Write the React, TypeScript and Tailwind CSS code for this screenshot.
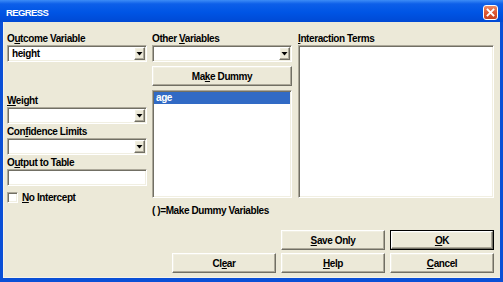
import React from "react";

const SUNKEN =
  "border border-t-[#aca899] border-l-[#aca899] border-r-white border-b-white shadow-[inset_1px_1px_0_#716f64,inset_-1px_-1px_0_#f1efe2] bg-white";
const RAISED =
  "border border-t-white border-l-white border-r-[#716f64] border-b-[#716f64] shadow-[inset_-1px_-1px_0_#aca899,inset_1px_1px_0_#f1efe2] bg-[#ece9d8]";
const TXT = "text-[10px] font-bold tracking-[-0.4px] text-black whitespace-nowrap";

function Label({ children, className = "" }: { children: React.ReactNode; className?: string }) {
  return <div className={`h-[12px] leading-[12px] ${TXT} ${className}`}>{children}</div>;
}

function Arrow() {
  return (
    <svg width="7" height="4" viewBox="0 0 7 4">
      <polygon points="0.5,0 6.5,0 3.5,3.5" fill="#000" />
    </svg>
  );
}

function Combo({ value }: { value?: string }) {
  return (
    <div className={`h-[17px] flex p-[1px] ${SUNKEN}`}>
      <div className={`flex-1 pl-[3px] leading-[13px] ${TXT}`}>{value}</div>
      <div className={`w-[11px] flex items-center justify-center pt-[1px] ${RAISED}`}>
        <Arrow />
      </div>
    </div>
  );
}

function Button({ children, def = false }: { children: React.ReactNode; def?: boolean }) {
  if (def) {
    return (
      <div className="w-[104px] h-[20px] border border-black flex">
        <div className={`flex-1 flex items-center justify-center ${RAISED} ${TXT}`}>{children}</div>
      </div>
    );
  }
  return (
    <div className={`w-[104px] h-[20px] flex items-center justify-center ${RAISED} ${TXT}`}>{children}</div>
  );
}

export default function App() {
  return (
    <div className="w-[503px] h-[282px] overflow-hidden flex flex-col bg-[#0a4fd6] font-['Liberation_Sans',Arial,sans-serif]">
      {/* Title bar */}
      <div className="h-[22px] shrink-0 flex justify-between bg-[linear-gradient(to_bottom,#3d8cf6_0%,#0d5fe9_18%,#0055e5_55%,#0049d4_100%)]">
        <div className="pl-[6px] pt-[7px] leading-[11px] text-[9.5px] font-bold tracking-[-0.6px] text-white">
          REGRESS
        </div>
        <div className="pr-[5px] pt-[5px]">
          <div className="w-[15px] h-[15px] rounded-[3px] border border-white bg-[linear-gradient(to_bottom,#ec8a66_0%,#de5a34_50%,#c8421f_100%)] flex items-center justify-center">
            <svg width="9" height="9" viewBox="0 0 9 9">
              <path d="M1.5 1.5 L7.5 7.5 M7.5 1.5 L1.5 7.5" stroke="#fff" strokeWidth="1.8" strokeLinecap="square" />
            </svg>
          </div>
        </div>
      </div>

      {/* Body */}
      <div className="flex-1 mx-[3px] mb-[4px] bg-[#ece9d8] border-l border-b border-[#f4f2ea] flex flex-col pl-[3px] pr-[6px] pt-[11px]">
        <div className="flex">
          {/* Left column */}
          <div className="w-[140px] flex flex-col">
            <Label>
              O<u>u</u>tcome Variable
            </Label>
            <Combo value="height" />
            <Label className="mt-[33px]">
              <u>W</u>eight
            </Label>
            <Combo />
            <Label className="mt-[2px]">
              Con<u>f</u>idence Limits
            </Label>
            <Combo />
            <Label className="mt-[2px]">
              O<u>u</u>tput to Table
            </Label>
            <div className={`h-[17px] ${SUNKEN}`} />
            <div className="mt-[6px] flex items-center h-[11px]">
              <div className={`w-[11px] h-[11px] ${SUNKEN}`} />
              <span className={`ml-[4px] leading-[12px] ${TXT}`}>
                <u>N</u>o Intercept
              </span>
            </div>
          </div>

          {/* Middle column */}
          <div className="w-[140px] ml-[5px] flex flex-col">
            <Label>
              Other <u>V</u>ariables
            </Label>
            <Combo />
            <div className="mt-[4px]">
              <div className={`w-full h-[20px] flex items-center justify-center ${RAISED} ${TXT}`}>
                Ma<u>k</u>e Dummy
              </div>
            </div>
            <div className={`mt-[4px] h-[108px] p-[1px] ${SUNKEN}`}>
              <div className={`h-[12px] leading-[12px] pl-[2px] bg-[#316ac5] ${TXT} text-white`}>age</div>
            </div>
            <Label className="mt-[7px]">( )=Make Dummy Variables</Label>
          </div>

          {/* Right column */}
          <div className="flex-1 ml-[6px] flex flex-col">
            <Label>
              <u>I</u>nteraction Terms
            </Label>
            <div className={`h-[153px] ${SUNKEN}`} />
          </div>
        </div>

        {/* Buttons */}
        <div className="mt-[13px] flex flex-col items-end gap-[3px]">
          <div className="flex gap-[5px]">
            <Button>
              <u>S</u>ave Only
            </Button>
            <Button def>
              <u>O</u>K
            </Button>
          </div>
          <div className="flex gap-[5px]">
            <Button>
              Cl<u>e</u>ar
            </Button>
            <Button>
              <u>H</u>elp
            </Button>
            <Button>
              <u>C</u>ancel
            </Button>
          </div>
        </div>
      </div>
    </div>
  );
}
